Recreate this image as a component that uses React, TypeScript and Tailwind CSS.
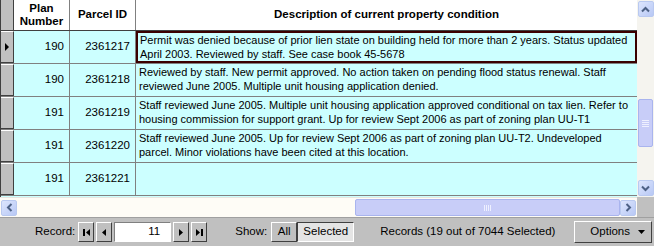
import React from 'react';

type Row = { plan: string; parcel: string; desc: string[] };

const rows: Row[] = [
    { plan: '190', parcel: '2361217', desc: ['Permit was denied because of prior lien state on building held for more than 2 years. Status updated', 'April 2003. Reviewed by staff. See case book 45-5678'] },
    { plan: '190', parcel: '2361218', desc: ['Reviewed by staff. New permit approved. No action taken on pending flood status renewal. Staff', 'reviewed June 2005. Multiple unit housing application denied.'] },
    { plan: '191', parcel: '2361219', desc: ['Staff reviewed June 2005. Multiple unit housing application approved conditional on tax lien. Refer to', 'housing commission for support grant. Up for review Sept 2006 as part of zoning plan UU-T1'] },
    { plan: '191', parcel: '2361220', desc: ['Staff reviewed June 2005. Up for review Sept 2006 as part of zoning plan UU-T2. Undeveloped', 'parcel. Minor violations have been cited at this location.'] },
    { plan: '191', parcel: '2361221', desc: [] },
];

const Chevron: React.FC<{ dir: 'up' | 'down' | 'left' | 'right' }> = ({ dir }) => {
    const rot = { up: 0, right: 90, down: 180, left: 270 }[dir];
    return (
        <svg width="9" height="9" viewBox="0 0 9 9" style={{ transform: `rotate(${rot}deg)` }}>
            <path d="M1 6.5 L4.5 3 L8 6.5" fill="none" stroke="#4d6185" strokeWidth="2" />
        </svg>
    );
};

const ScrollBtn: React.FC<{ dir: 'up' | 'down' | 'left' | 'right' }> = ({ dir }) => (
    <div className="shrink-0 w-[16px] h-[16px] rounded-[2px] border border-[#b9c9f0] bg-gradient-to-br from-[#dde6fd] to-[#b8c8f5] flex items-center justify-center">
        <Chevron dir={dir} />
    </div>
);

const NavBtn: React.FC<{ children: React.ReactNode }> = ({ children }) => (
    <div className="shrink-0 w-[16px] h-[20px] border-t border-l border-t-white border-l-white border-b border-r border-b-[#404040] border-r-[#404040] bg-[#c0c0c0] flex items-center justify-center">
        {children}
    </div>
);

export default function App() {
    return (
        <div className="w-[654px] h-[246px] bg-[#c0c0c0] flex flex-col overflow-hidden text-black" style={{ fontFamily: '"Liberation Sans", Arial, sans-serif' }}>
            <div className="flex h-[197px] shrink-0">
                <div className="w-[637px] shrink-0 flex flex-col bg-[#ccffff] border-l border-[#404040] overflow-hidden">
                    <div className="flex h-[31px] shrink-0 bg-white border-b border-[#404040] text-[11.5px] font-bold">
                        <div className="w-[13px] shrink-0 bg-[#c0c0c0] border-r border-[#404040]" />
                        <div className="w-[56px] shrink-0 border-r border-[#808080] flex items-center justify-center text-center leading-[13px]">Plan<br />Number</div>
                        <div className="w-[66px] shrink-0 border-r border-[#808080] flex items-center justify-center">Parcel ID</div>
                        <div className="flex-1 flex items-center justify-center">Description of current property condition</div>
                    </div>
                    {rows.map((r, i) => (
                        <div key={r.parcel} className="flex h-[33px] shrink-0 border-b border-[#808080] text-[11px]">
                            <div className="w-[13px] shrink-0 bg-[#c0c0c0] border-t border-t-white border-r border-r-[#404040] border-b border-b-[#404040] flex items-center justify-center">
                                {i === 0 && (
                                    <svg width="5" height="8" viewBox="0 0 5 8"><path d="M0 0 L4 4 L0 8 Z" fill="#000" /></svg>
                                )}
                            </div>
                            <div className="w-[56px] shrink-0 border-r border-[#808080] flex items-center justify-end pr-[5px] text-[11.5px]">{r.plan}</div>
                            <div className="w-[66px] shrink-0 border-r border-[#808080] flex items-center justify-end pr-[5px] text-[11.5px]">{r.parcel}</div>
                            <div className={`flex-1 min-w-0 overflow-hidden leading-[14px] ${i === 0 ? 'border-2 border-[#3a0000] pl-[2px] pt-0' : 'pl-[3px] pt-[1px]'}`}>
                                {r.desc.map((l) => (
                                    <div key={l} className="whitespace-nowrap">{l}</div>
                                ))}
                            </div>
                        </div>
                    ))}
                </div>
                <div className="w-[17px] shrink-0 bg-[#f5f4ef] flex flex-col items-center py-[1px]">
                    <ScrollBtn dir="up" />
                    <div className="flex-1 w-full flex flex-col items-center pt-[82px]">
                        <div className="w-[15px] h-[48px] rounded-[2px] border border-[#a9b4ee] bg-[#c8cdf8] flex items-center justify-center">
                            <div className="flex flex-col gap-[1px]">
                                <div className="w-[7px] h-[1px] bg-[#eef0ff]" />
                                <div className="w-[7px] h-[1px] bg-[#eef0ff]" />
                                <div className="w-[7px] h-[1px] bg-[#eef0ff]" />
                                <div className="w-[7px] h-[1px] bg-[#eef0ff]" />
                            </div>
                        </div>
                    </div>
                    <ScrollBtn dir="down" />
                </div>
            </div>
            <div className="flex h-[20px] shrink-0">
                <div className="w-[637px] shrink-0 bg-[#fefcf6] border-t border-[#e8e6e0] flex items-center px-[1px]">
                    <ScrollBtn dir="left" />
                    <div className="w-[338px] shrink-0" />
                    <div className="flex-1 h-[17px] rounded-[2px] border border-[#a9b4ee] bg-[#c8cdf8] flex items-center justify-center">
                        <div className="flex gap-[1px]">
                            <div className="w-[1px] h-[6px] bg-[#eef0ff]" />
                            <div className="w-[1px] h-[6px] bg-[#eef0ff]" />
                            <div className="w-[1px] h-[6px] bg-[#eef0ff]" />
                            <div className="w-[1px] h-[6px] bg-[#eef0ff]" />
                        </div>
                    </div>
                    <ScrollBtn dir="right" />
                </div>
                <div className="flex-1 bg-[#c0c0c0]" />
            </div>
            <div className="flex-1 flex items-center border-t border-[#a0a0a0] text-[11.5px] whitespace-nowrap">
                <span className="ml-[35px] mr-[3px]">Record:</span>
                <div className="flex gap-[2px] items-center">
                    <NavBtn>
                        <svg width="7" height="7" viewBox="0 0 7 7"><rect x="0" y="0" width="2" height="7" fill="#000" /><path d="M7 0 L3 3.5 L7 7 Z" fill="#000" /></svg>
                    </NavBtn>
                    <NavBtn>
                        <svg width="4" height="7" viewBox="0 0 4 7"><path d="M4 0 L0 3.5 L4 7 Z" fill="#000" /></svg>
                    </NavBtn>
                    <div className="shrink-0 w-[57px] h-[20px] bg-white border-t border-l border-[#808080] border-b border-r border-b-white border-r-white flex items-center justify-end pr-[10px]">11</div>
                    <NavBtn>
                        <svg width="4" height="7" viewBox="0 0 4 7"><path d="M0 0 L4 3.5 L0 7 Z" fill="#000" /></svg>
                    </NavBtn>
                    <NavBtn>
                        <svg width="7" height="7" viewBox="0 0 7 7"><path d="M0 0 L4 3.5 L0 7 Z" fill="#000" /><rect x="5" y="0" width="2" height="7" fill="#000" /></svg>
                    </NavBtn>
                </div>
                <span className="ml-[28px] mr-[4px]">Show:</span>
                <div className="shrink-0 h-[20px] w-[26px] border-t border-l border-t-white border-l-white border-b border-r border-b-[#404040] border-r-[#404040] flex items-center justify-center">All</div>
                <div className="shrink-0 h-[20px] w-[57px] bg-[#e4e4e4] border-t border-l border-[#404040] border-b border-r border-b-white border-r-white flex items-center justify-center">Selected</div>
                <span className="ml-[26px]">Records (19 out of 7044 Selected)</span>
                <div className="shrink-0 ml-auto mr-[2px] w-[78px] h-[22px] border-t border-l border-t-white border-l-white border-b border-r border-b-[#404040] border-r-[#404040] flex items-center justify-end pr-[6px] gap-[8px]">
                    <span>Options</span>
                    <svg width="7" height="4" viewBox="0 0 7 4"><path d="M0 0 L7 0 L3.5 4 Z" fill="#000" /></svg>
                </div>
            </div>
        </div>
    );
}
